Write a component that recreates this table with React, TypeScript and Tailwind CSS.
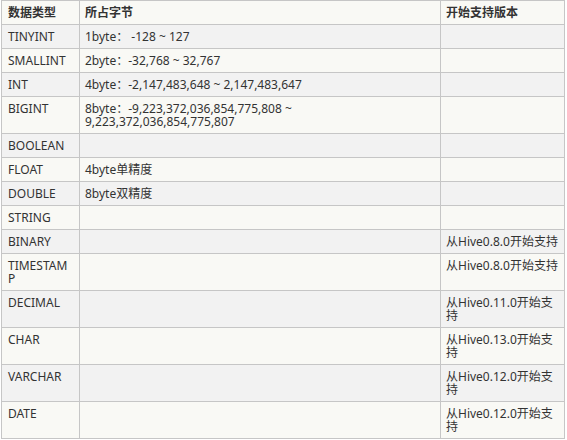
import React from 'react'

const ROWS: [string, string, string][] = [
  ['TINYINT', '1byte： -128 ~ 127', ''],
  ['SMALLINT', '2byte：-32,768 ~ 32,767', ''],
  ['INT', '4byte：-2,147,483,648 ~ 2,147,483,647', ''],
  ['BIGINT', '8byte：-9,223,372,036,854,775,808 ~ 9,223,372,036,854,775,807', ''],
  ['BOOLEAN', '', ''],
  ['FLOAT', '4byte单精度', ''],
  ['DOUBLE', '8byte双精度', ''],
  ['STRING', '', ''],
  ['BINARY', '', '从Hive0.8.0开始支持'],
  ['TIMESTAMP', '', '从Hive0.8.0开始支持'],
  ['DECIMAL', '', '从Hive0.11.0开始支持'],
  ['CHAR', '', '从Hive0.13.0开始支持'],
  ['VARCHAR', '', '从Hive0.12.0开始支持'],
  ['DATE', '', '从Hive0.12.0开始支持'],
]

const base = 'border border-[#c6c6c6] py-[5px] align-top text-left'
const c1 = base + ' px-[6px] break-all'
const c2 = base + ' px-[5px]'
const c3 = base + ' pl-[5px] pr-[4px]'

export default function App() {
  return (
    <div className="bg-white w-[567px] h-[440px] pl-[1px]">
      <table
        className="table-fixed border-collapse w-[564px] text-[12px] leading-[13px] text-[#333]"
        style={{ fontFamily: '"Noto Sans", "Noto Sans CJK SC", sans-serif' }}
      >
        <colgroup>
          <col className="w-[78px]" />
          <col className="w-[361px]" />
          <col className="w-[124px]" />
        </colgroup>
        <thead>
          <tr className="bg-[#f9f9f5]">
            <th className={c1 + ' font-bold'}>数据类型</th>
            <th className={c2 + ' font-bold'}>所占字节</th>
            <th className={c3 + ' font-bold'}>开始支持版本</th>
          </tr>
        </thead>
        <tbody>
          {ROWS.map((r, i) => (
            <tr key={r[0]} className={i % 2 === 0 ? 'bg-[#f2f2f2]' : 'bg-[#f9f9f5]'}>
              <td className={c1}>{r[0]}</td>
              <td className={c2}>{r[1]}</td>
              <td className={c3}>{r[2]}</td>
            </tr>
          ))}
        </tbody>
      </table>
    </div>
  )
}
